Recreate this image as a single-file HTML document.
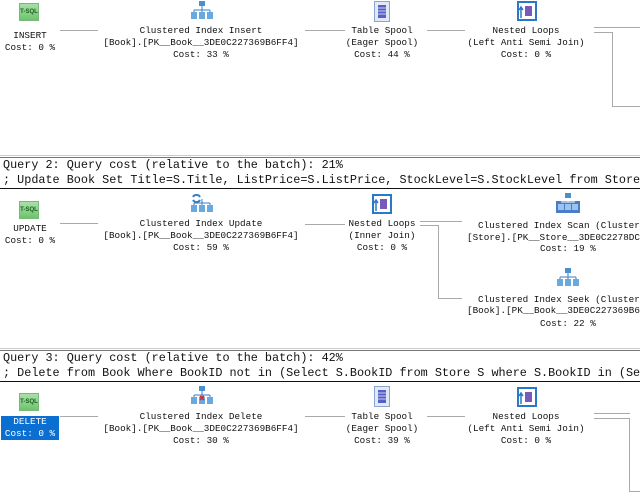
<!DOCTYPE html>
<html><head><meta charset="utf-8">
<style>
*{margin:0;padding:0;box-sizing:border-box}
body{width:640px;height:501px;overflow:hidden;background:#fff;position:relative;font-family:"Liberation Mono",monospace;color:#111}
.n{position:absolute;width:300px;text-align:center;font-size:9.3px;line-height:12px;white-space:pre}
.l{position:absolute;font-size:9.3px;line-height:12px;white-space:pre}
.h{position:absolute;left:3px;font-size:11.8px;line-height:15px;white-space:pre}
.ic{position:absolute}
.ar{position:absolute;height:1px;background:#aaa}
.vl{position:absolute;width:1px;background:#aaa}
.tsql{position:absolute;width:20px;height:18px;background:linear-gradient(#a8e0a8,#6cc46c);border:1px solid #7ab87a;font-size:6px;line-height:16px;text-align:center;font-family:"Liberation Sans",sans-serif;font-weight:bold;color:#1d5a1d}
</style></head><body>

<!-- Section 1 -->
<div class="tsql" style="left:19px;top:3px">T-SQL</div>
<div class="n" style="left:-120px;top:30px">INSERT
Cost: 0 %</div>
<div class="ar" style="left:60px;top:30px;width:38px"></div>

<svg class="ic" style="left:190px;top:1px" width="24" height="20" viewBox="0 0 24 20"><rect x="9" y="0" width="6" height="5" fill="#4a90d0"/><path d="M12 5v4M4 9h16M4 9v3M12 9v3M20 9v3" stroke="#3a7cc0" fill="none"/><rect x="1" y="11" width="6" height="7" fill="#6aa8e0"/><rect x="9" y="11" width="6" height="7" fill="#6aa8e0"/><rect x="17" y="11" width="6" height="7" fill="#6aa8e0"/></svg>
<div class="n" style="left:51px;top:25px">Clustered Index Insert
[Book].[PK__Book__3DE0C227369B6FF4]
Cost: 33 %</div>
<div class="ar" style="left:305px;top:30px;width:40px"></div>

<svg class="ic" style="left:374px;top:1px" width="16" height="21" viewBox="0 0 16 21"><rect x="0.5" y="0.5" width="15" height="20" fill="#dfe9f7" stroke="#8aa6cc"/><rect x="4" y="4" width="8" height="13" fill="#5a5ec8"/><path d="M4 7h8M4 10h8M4 13h8" stroke="#c8ccf0"/></svg>
<div class="n" style="left:232px;top:25px">Table Spool
(Eager Spool)
Cost: 44 %</div>
<div class="ar" style="left:427px;top:30px;width:38px"></div>

<svg class="ic" style="left:517px;top:1px" width="20" height="20" viewBox="0 0 20 20"><rect x="1" y="1" width="18" height="18" fill="#fff" stroke="#2a78c8" stroke-width="2"/><rect x="8" y="5" width="7" height="10" fill="#7a5ab8"/><path d="M4 17V7M2 9l2-3 2 3" stroke="#2a78c8" stroke-width="1.5" fill="none"/></svg>
<div class="n" style="left:376px;top:25px">Nested Loops
(Left Anti Semi Join)
Cost: 0 %</div>
<div class="ar" style="left:594px;top:27px;width:46px"></div>
<div class="ar" style="left:594px;top:32px;width:18px"></div>
<div class="vl" style="left:612px;top:32px;height:74px"></div>
<div class="ar" style="left:612px;top:106px;width:28px"></div>

<!-- Separator 1 -->
<div style="position:absolute;left:0;top:155px;width:640px;height:1px;background:#ccc"></div>
<div style="position:absolute;left:0;top:157px;width:640px;height:1px;background:#777"></div>
<div class="h" style="top:158px">Query 2: Query cost (relative to the batch): 21%</div>
<div class="h" style="top:173px">; Update Book Set Title=S.Title, ListPrice=S.ListPrice, StockLevel=S.StockLevel from Store</div>
<div style="position:absolute;left:0;top:188px;width:640px;height:1px;background:#111"></div>

<!-- Section 2 -->
<div class="tsql" style="left:19px;top:201px">T-SQL</div>
<div class="n" style="left:-120px;top:223px">UPDATE
Cost: 0 %</div>
<div class="ar" style="left:60px;top:223px;width:38px"></div>

<svg class="ic" style="left:190px;top:194px" width="24" height="20" viewBox="0 0 24 20"><path d="M3 3a4 4 0 0 1 7 0M10 6a4 4 0 0 1-7 0" stroke="#3a7cc0" stroke-width="2" fill="none"/><path d="M12 5v4M4 9h16M4 9v3M12 9v3M20 9v3" stroke="#3a7cc0" fill="none"/><rect x="1" y="11" width="6" height="7" fill="#6aa8e0"/><rect x="9" y="11" width="6" height="7" fill="#6aa8e0"/><rect x="17" y="11" width="6" height="7" fill="#6aa8e0"/></svg>
<div class="n" style="left:51px;top:218px">Clustered Index Update
[Book].[PK__Book__3DE0C227369B6FF4]
Cost: 59 %</div>
<div class="ar" style="left:305px;top:224px;width:40px"></div>

<svg class="ic" style="left:372px;top:194px" width="20" height="20" viewBox="0 0 20 20"><rect x="1" y="1" width="18" height="18" fill="#fff" stroke="#2a78c8" stroke-width="2"/><rect x="8" y="5" width="7" height="10" fill="#7a5ab8"/><path d="M4 17V7M2 9l2-3 2 3" stroke="#2a78c8" stroke-width="1.5" fill="none"/></svg>
<div class="n" style="left:232px;top:218px">Nested Loops
(Inner Join)
Cost: 0 %</div>
<div class="ar" style="left:420px;top:221px;width:42px"></div>
<div class="ar" style="left:420px;top:225px;width:18px"></div>
<div class="vl" style="left:438px;top:225px;height:74px"></div>
<div class="ar" style="left:438px;top:298px;width:24px"></div>

<svg class="ic" style="left:556px;top:193px" width="24" height="22" viewBox="0 0 24 22"><rect x="0" y="8" width="24" height="12" fill="#4a7cc8"/><rect x="9" y="0" width="6" height="5" fill="#4a90d0"/><path d="M12 5v4M5 9h14" stroke="#fff" fill="none"/><rect x="2" y="11" width="6" height="6" fill="#9ac4f0"/><rect x="9" y="11" width="6" height="6" fill="#9ac4f0"/><rect x="16" y="11" width="6" height="6" fill="#9ac4f0"/></svg>
<div class="l" style="left:478px;top:220px">Clustered Index Scan (Cluster</div>
<div class="l" style="left:467px;top:232px">[Store].[PK__Store__3DE0C2278DC</div>
<div class="l" style="left:540px;top:243px">Cost: 19 %</div>

<svg class="ic" style="left:556px;top:268px" width="24" height="22" viewBox="0 0 24 22"><rect x="9" y="0" width="6" height="5" fill="#4a90d0"/><path d="M12 5v4M4 9h16M4 9v3M12 9v3M20 9v3" stroke="#3a7cc0" fill="none"/><rect x="1" y="11" width="6" height="7" fill="#6aa8e0"/><rect x="9" y="11" width="6" height="7" fill="#6aa8e0"/><rect x="17" y="11" width="6" height="7" fill="#6aa8e0"/></svg>
<div class="l" style="left:478px;top:294px">Clustered Index Seek (Cluster</div>
<div class="l" style="left:467px;top:305px">[Book].[PK__Book__3DE0C227369B6</div>
<div class="l" style="left:540px;top:318px">Cost: 22 %</div>

<!-- Separator 2 -->
<div style="position:absolute;left:0;top:348px;width:640px;height:1px;background:#ccc"></div>
<div style="position:absolute;left:0;top:350px;width:640px;height:1px;background:#777"></div>
<div class="h" style="top:351px">Query 3: Query cost (relative to the batch): 42%</div>
<div class="h" style="top:366px">; Delete from Book Where BookID not in (Select S.BookID from Store S where S.BookID in (Se</div>
<div style="position:absolute;left:0;top:381px;width:640px;height:1px;background:#111"></div>

<!-- Section 3 -->
<div class="tsql" style="left:19px;top:393px">T-SQL</div>
<div style="position:absolute;left:1px;top:416px;width:58px;height:24px;background:#0a6fd0"></div>
<div class="n" style="left:-120px;top:416px;color:#fff">DELETE
Cost: 0 %</div>
<div class="ar" style="left:60px;top:416px;width:38px"></div>

<svg class="ic" style="left:190px;top:386px" width="24" height="20" viewBox="0 0 24 20"><rect x="9" y="0" width="6" height="5" fill="#4a90d0"/><path d="M12 5v4M4 9h16M4 9v3M12 9v3M20 9v3" stroke="#3a7cc0" fill="none"/><rect x="1" y="11" width="6" height="7" fill="#6aa8e0"/><rect x="9" y="11" width="6" height="7" fill="#6aa8e0"/><rect x="17" y="11" width="6" height="7" fill="#6aa8e0"/><path d="M10 10l4 4M14 10l-4 4" stroke="#e02020" stroke-width="1.5"/></svg>
<div class="n" style="left:51px;top:411px">Clustered Index Delete
[Book].[PK__Book__3DE0C227369B6FF4]
Cost: 30 %</div>
<div class="ar" style="left:305px;top:416px;width:40px"></div>

<svg class="ic" style="left:374px;top:386px" width="16" height="21" viewBox="0 0 16 21"><rect x="0.5" y="0.5" width="15" height="20" fill="#dfe9f7" stroke="#8aa6cc"/><rect x="4" y="4" width="8" height="13" fill="#5a5ec8"/><path d="M4 7h8M4 10h8M4 13h8" stroke="#c8ccf0"/></svg>
<div class="n" style="left:232px;top:411px">Table Spool
(Eager Spool)
Cost: 39 %</div>
<div class="ar" style="left:427px;top:416px;width:38px"></div>

<svg class="ic" style="left:517px;top:387px" width="20" height="20" viewBox="0 0 20 20"><rect x="1" y="1" width="18" height="18" fill="#fff" stroke="#2a78c8" stroke-width="2"/><rect x="8" y="5" width="7" height="10" fill="#7a5ab8"/><path d="M4 17V7M2 9l2-3 2 3" stroke="#2a78c8" stroke-width="1.5" fill="none"/></svg>
<div class="n" style="left:376px;top:411px">Nested Loops
(Left Anti Semi Join)
Cost: 0 %</div>
<div class="ar" style="left:594px;top:413px;width:36px"></div>
<div class="ar" style="left:594px;top:418px;width:36px"></div>
<div class="vl" style="left:629px;top:418px;height:73px"></div>
<div class="ar" style="left:629px;top:491px;width:11px"></div>

</body></html>
